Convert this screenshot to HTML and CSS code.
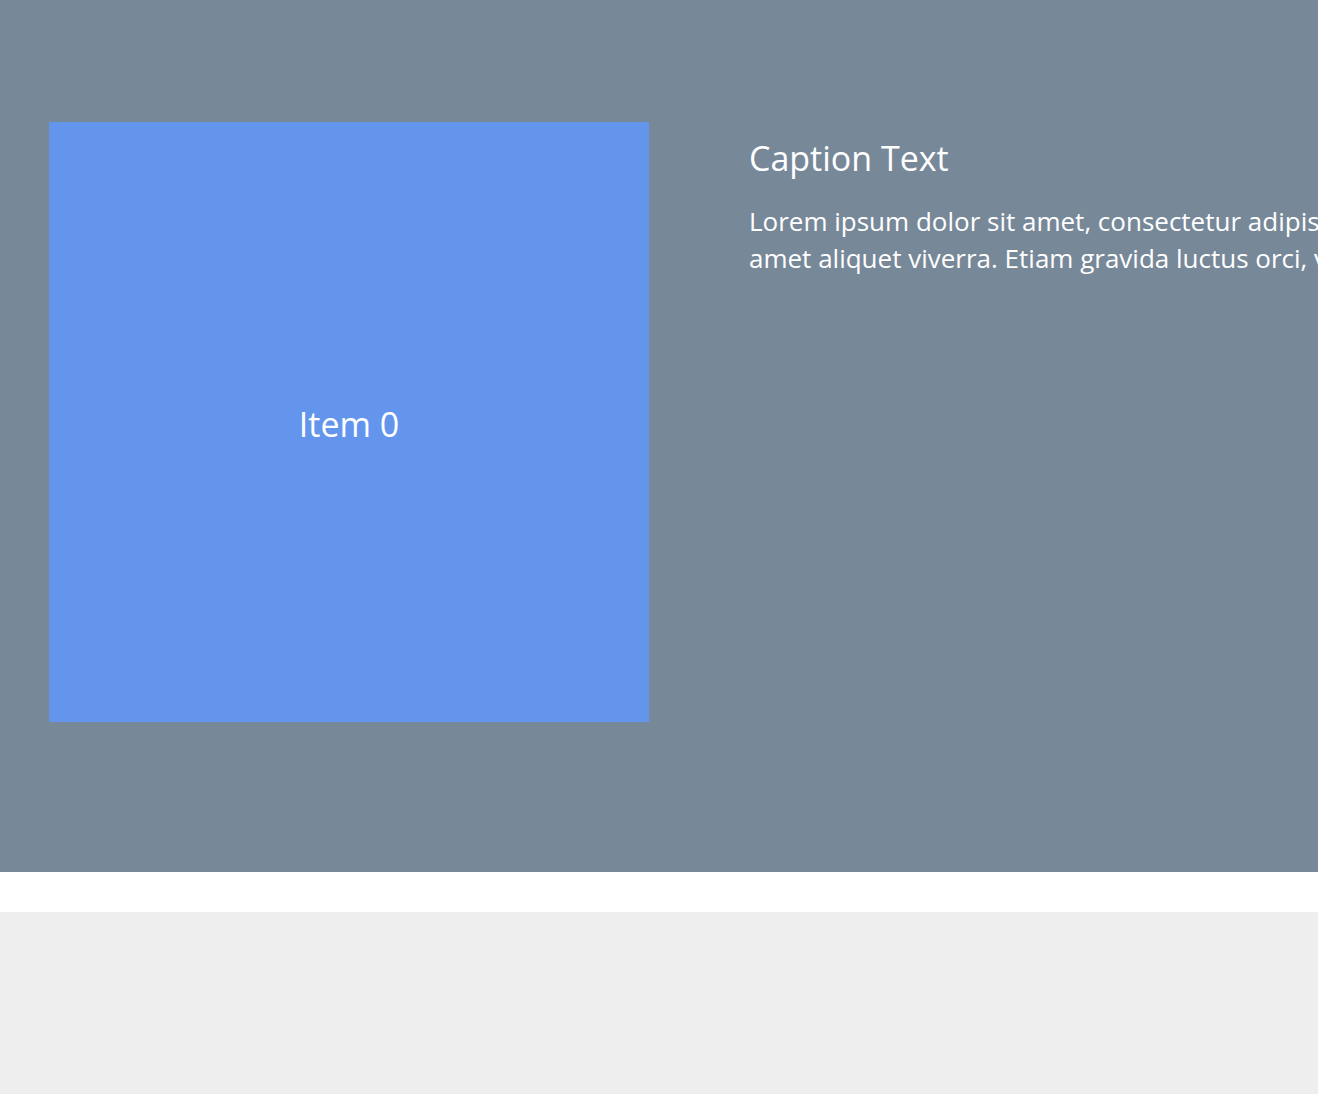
FILE: index.html
```html
<!DOCTYPE html>
<html>
<head>
<meta charset="utf-8">
<link rel="stylesheet" href="styles.css">
</head>
<body>
<section class="hero">
  <div class="slide">
    <div class="tile">Item 0</div>
    <div class="caption">
      <h2 class="caption-title">Caption Text</h2>
      <p class="caption-body">Lorem ipsum dolor sit amet, consectetur adipiscing elit. Integer nec odio. Praesent libero. Sed cursus ante dapibus diam sit<br>amet aliquet viverra. Etiam gravida luctus orci, vel cursus nisi pretium ut. Nulla facilisi.</p>
    </div>
  </div>
</section>
<div class="spacer"></div>
<section class="footer"></section>
</body>
</html>
```

FILE: styles.css
```css
html, body {
  margin: 0;
  padding: 0;
  overflow: hidden;
  background: #ffffff;
  font-family: "Open Sans", "Noto Sans", sans-serif;
}
.hero {
  background: #778899;
  height: 872px;
  box-sizing: border-box;
  padding: 122px 0 0 49px;
  overflow: hidden;
}
.slide {
  display: flex;
  gap: 100px;
  align-items: flex-start;
}
.tile {
  flex: 0 0 600px;
  height: 600px;
  box-sizing: border-box;
  padding-top: 4px;
  background: #6495ed;
  color: #ffffff;
  display: flex;
  align-items: center;
  justify-content: center;
  font-size: 34px;
}
.caption {
  flex: 0 0 1400px;
  color: #ffffff;
  padding-top: 12px;
}
.caption-title {
  margin: 0;
  font-weight: 400;
  font-size: 34px;
  line-height: 48px;
}
.caption-body {
  margin: 21px 0 0;
  font-size: 26px;
  line-height: 37px;
  white-space: nowrap;
}
.spacer {
  height: 40px;
}
.footer {
  background: #eeeeee;
  height: 182px;
}
```
